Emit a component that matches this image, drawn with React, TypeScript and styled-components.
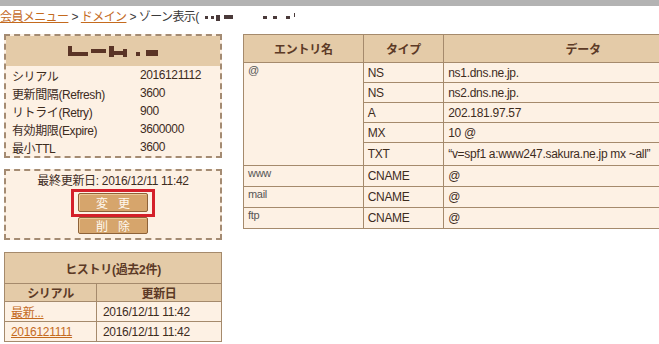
import React from "react";
import styled, { createGlobalStyle } from "styled-components";

const GlobalStyle = createGlobalStyle`
  html, body { margin: 0; padding: 0; background: #fff; overflow: hidden; }
  body {
    font-family: "Liberation Sans", "Noto Sans CJK JP", sans-serif;
    font-size: 12px;
    color: #3d2c1e;
  }
`;

const TopBar = styled.div`
  height: 6px;
  background: #b3b3b3;
`;

const Breadcrumb = styled.div`
  padding-top: 3px;
  height: 16px;
  line-height: 16px;
  font-size: 12px;
  letter-spacing: -0.6px;
  color: #3a3a3a;
  white-space: nowrap;
  display: flex;
  align-items: center;
`;

const Crumb = styled.a`
  color: #c46a1e;
  text-decoration: underline;
`;

const Sep = styled.span`
  margin: 0 3px;
`;

const Block = styled.span<{ $w: number; $h: number; $ml: number; $dy: number; $c: string }>`
  display: inline-block;
  width: ${(p) => p.$w}px;
  height: ${(p) => p.$h}px;
  margin-left: ${(p) => p.$ml}px;
  background: ${(p) => p.$c};
  transform: translateY(${(p) => p.$dy}px);
`;

type Blk = [number, number, number, number];

const Redact = ({ blocks, color }: { blocks: Blk[]; color: string }) => (
  <RedactWrap>
    {blocks.map(([w, h, ml, dy], i) => (
      <Block key={i} $w={w} $h={h} $ml={ml} $dy={dy} $c={color} />
    ))}
  </RedactWrap>
);

const RedactWrap = styled.span`
  display: inline-flex;
  align-items: center;
`;

const Main = styled.div`
  display: flex;
  align-items: flex-start;
  gap: 21px;
  padding-left: 4px;
  margin-top: 9px;
`;

const LeftCol = styled.div`
  width: 218px;
  display: flex;
  flex-direction: column;
`;

const DashedBox = styled.div<{ $h: number; $mt?: number }>`
  box-sizing: border-box;
  height: ${(p) => p.$h}px;
  margin-top: ${(p) => p.$mt ?? 0}px;
  border: 2px dashed #a48b72;
  background: #fdf1e4;
`;

const PanelHead = styled.div`
  height: 30px;
  background: #e4cba8;
  display: flex;
  align-items: center;
  justify-content: center;
`;

const InfoGrid = styled.div`
  display: grid;
  grid-template-columns: 128px 1fr;
  grid-auto-rows: 18px;
  padding-left: 6px;
  align-items: center;
  letter-spacing: -0.4px;
`;

const UpdateBox = styled.div`
  display: flex;
  flex-direction: column;
  align-items: center;
  padding-top: 2px;
`;

const UpdateText = styled.div`
  line-height: 16px;
  letter-spacing: -0.3px;
`;

const Button = styled.button<{ $h: number; $mt: number; $mark?: boolean }>`
  position: relative;
  width: 70px;
  height: ${(p) => p.$h}px;
  margin-top: ${(p) => p.$mt}px;
  padding: 0;
  background: #d6a56c;
  border: 1px solid #8e6238;
  border-radius: 2px;
  box-shadow: inset 1px 1px 0 #ecc796;
  color: #fff9f0;
  font-family: "Noto Sans CJK JP", sans-serif;
  font-size: 12px;
  line-height: 1;
  letter-spacing: 10px;
  text-indent: 10px;
  &::after {
    content: "";
    display: ${(p) => (p.$mark ? "block" : "none")};
    position: absolute;
    top: -5px;
    bottom: -6px;
    left: -8px;
    right: -8px;
    border: 3px solid #d4202a;
  }
`;

const HistTable = styled.table`
  margin-top: 12px;
  width: 218px;
  border-collapse: collapse;
  border: 1px solid #a58a6c;
  letter-spacing: -0.3px;
`;

const HistTitle = styled.th`
  height: 30px;
  padding: 0;
  background: #e4cba8;
  color: #5c3a26;
  font-weight: bold;
  border: 1px solid #a58a6c;
`;

const HistHead = styled.th<{ $w?: number }>`
  height: 16px;
  padding: 0;
  width: ${(p) => (p.$w ? `${p.$w}px` : "auto")};
  background: #e4cba8;
  color: #5c3a26;
  font-weight: bold;
  border: 1px solid #a58a6c;
`;

const HistCell = styled.td`
  height: 19px;
  padding: 0 0 0 6px;
  background: #fdf1e4;
  border: 1px solid #a58a6c;
`;

const HistLink = styled.a`
  color: #c46a1e;
  text-decoration: underline;
`;

const ZoneTable = styled.table`
  width: 480px;
  flex: none;
  border-collapse: collapse;
  border: 1px solid #a58a6c;
  letter-spacing: -0.3px;
`;

const ZHead = styled.th<{ $w: number }>`
  width: ${(p) => p.$w}px;
  height: 27px;
  padding: 0;
  background: #e4cba8;
  color: #5c3a26;
  font-weight: bold;
  border: 1px solid #a58a6c;
`;

const ZCell = styled.td<{ $top?: boolean; $h?: number }>`
  height: ${(p) => p.$h ?? 19}px;
  padding: ${(p) => (p.$top ? "1px 0 0 4px" : "0 0 0 4px")};
  vertical-align: ${(p) => (p.$top ? "top" : "middle")};
  background: #fdf1e4;
  border: 1px solid #a58a6c;
  color: ${(p) => (p.$top ? "#555" : "#3d2c1e")};
  font-size: ${(p) => (p.$top ? "11px" : "12px")};
`;

const info: [string, string][] = [
  ["シリアル", "2016121112"],
  ["更新間隔(Refresh)", "3600"],
  ["リトライ(Retry)", "900"],
  ["有効期限(Expire)", "3600000"],
  ["最小TTL", "3600"],
];

const apexRecords: [string, string, number][] = [
  ["NS", "ns1.dns.ne.jp.", 19],
  ["NS", "ns2.dns.ne.jp.", 19],
  ["A", "202.181.97.57", 19],
  ["MX", "10 @", 19],
  ["TXT", "“v=spf1 a:www247.sakura.ne.jp mx ~all”", 22],
];

const aliases = ["www", "mail", "ftp"];

const crumbBlocks: Blk[] = [
  [3, 3, 6, 0],
  [3, 3, 3, 0],
  [4, 6, 2, 1],
  [9, 4, 4, 0],
  [4, 3, 30, 0],
  [4, 3, 6, 0],
  [4, 3, 9, 0],
  [1, 4, 4, -2],
];

const headBlocks: Blk[] = [
  [4, 10, 0, 0],
  [16, 4, 0, 3],
  [15, 4, 3, 0],
  [5, 11, 3, 0],
  [9, 4, 0, 2],
  [4, 8, 0, 2],
  [4, 4, 9, 3],
  [12, 6, 6, 2],
];

export default function App() {
  return (
    <>
      <GlobalStyle />
      <TopBar />
      <Breadcrumb>
        <Crumb>会員メニュー</Crumb>
        <Sep>&gt;</Sep>
        <Crumb>ドメイン</Crumb>
        <Sep>&gt;</Sep>
        <span>ゾーン表示(</span>
        <Redact blocks={crumbBlocks} color="#4a3a3a" />
      </Breadcrumb>
      <Main>
        <LeftCol>
          <DashedBox $h={124}>
            <PanelHead>
              <Redact blocks={headBlocks} color="#5a3426" />
            </PanelHead>
            <InfoGrid>
              {info.map(([k, v]) => (
                <React.Fragment key={k}>
                  <span>{k}</span>
                  <span>{v}</span>
                </React.Fragment>
              ))}
            </InfoGrid>
          </DashedBox>
          <DashedBox $h={71} $mt={11}>
            <UpdateBox>
              <UpdateText>最終更新日: 2016/12/11 11:42</UpdateText>
              <Button $h={19} $mt={4} $mark>
                変更
              </Button>
              <Button $h={17} $mt={5}>
                削除
              </Button>
            </UpdateBox>
          </DashedBox>
          <HistTable>
            <tbody>
              <tr>
                <HistTitle colSpan={2}>ヒストリ(過去2件)</HistTitle>
              </tr>
              <tr>
                <HistHead $w={91}>シリアル</HistHead>
                <HistHead>更新日</HistHead>
              </tr>
              <tr>
                <HistCell>
                  <HistLink>最新...</HistLink>
                </HistCell>
                <HistCell>2016/12/11 11:42</HistCell>
              </tr>
              <tr>
                <HistCell>
                  <HistLink>2016121111</HistLink>
                </HistCell>
                <HistCell>2016/12/11 11:42</HistCell>
              </tr>
            </tbody>
          </HistTable>
        </LeftCol>
        <ZoneTable>
          <tbody>
            <tr>
              <ZHead $w={120}>エントリ名</ZHead>
              <ZHead $w={80}>タイプ</ZHead>
              <ZHead $w={280}>データ</ZHead>
            </tr>
            {apexRecords.map(([t, d, h], i) => (
              <tr key={i}>
                {i === 0 && (
                  <ZCell $top rowSpan={apexRecords.length}>
                    @
                  </ZCell>
                )}
                <ZCell $h={h}>{t}</ZCell>
                <ZCell $h={h}>{d}</ZCell>
              </tr>
            ))}
            {aliases.map((a) => (
              <tr key={a}>
                <ZCell $top>{a}</ZCell>
                <ZCell>CNAME</ZCell>
                <ZCell>@</ZCell>
              </tr>
            ))}
          </tbody>
        </ZoneTable>
      </Main>
    </>
  );
}
